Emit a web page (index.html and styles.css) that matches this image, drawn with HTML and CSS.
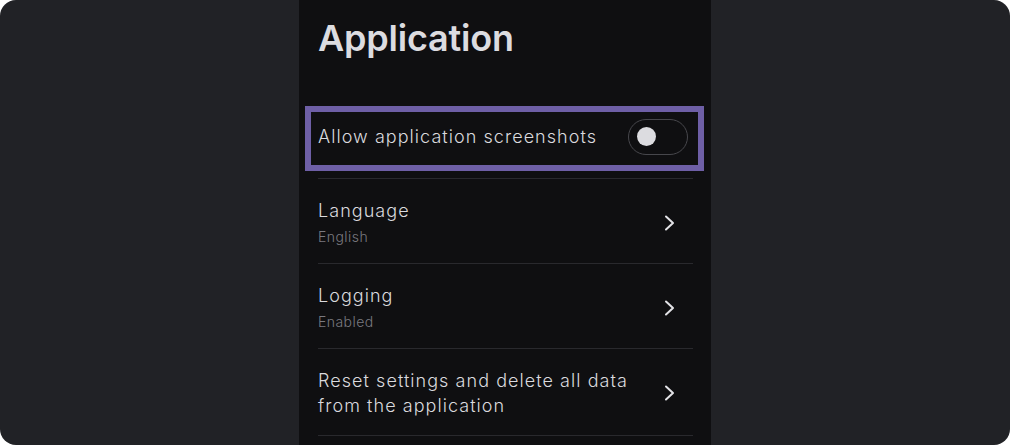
FILE: index.html
```html
<!DOCTYPE html>
<html lang="en">
<head>
<meta charset="utf-8">
<title>Application settings</title>
<link rel="stylesheet" href="styles.css">
</head>
<body>
<div class="frame">
  <main class="panel">
    <h1 class="title">Application</h1>
    <div class="highlight">
      <div class="row-toggle">
        <span class="label">Allow application screenshots</span>
        <span class="toggle"><span class="knob"></span></span>
      </div>
    </div>
    <ul class="list">
      <li class="item">
        <div class="text">
          <div class="label">Language</div>
          <div class="sub">English</div>
        </div>
        <svg class="chev" width="24" height="24" viewBox="0 0 24 24"><path d="M9 5.5l7 6.5-7 6.5" fill="none" stroke="#e2e2e6" stroke-width="2" stroke-linecap="round" stroke-linejoin="round"/></svg>
      </li>
      <li class="item">
        <div class="text">
          <div class="label">Logging</div>
          <div class="sub">Enabled</div>
        </div>
        <svg class="chev" width="24" height="24" viewBox="0 0 24 24"><path d="M9 5.5l7 6.5-7 6.5" fill="none" stroke="#e2e2e6" stroke-width="2" stroke-linecap="round" stroke-linejoin="round"/></svg>
      </li>
      <li class="item item-multi">
        <div class="text">
          <div class="label label-multi">Reset settings and delete all data<br>from the application</div>
        </div>
        <svg class="chev" width="24" height="24" viewBox="0 0 24 24"><path d="M9 5.5l7 6.5-7 6.5" fill="none" stroke="#e2e2e6" stroke-width="2" stroke-linecap="round" stroke-linejoin="round"/></svg>
      </li>
    </ul>
  </main>
</div>
</body>
</html>
```

FILE: styles.css
```css
* { box-sizing: border-box; }

html, body {
  margin: 0;
  padding: 0;
  background: #ffffff;
}

body {
  width: 1010px;
  height: 445px;
  overflow: hidden;
  font-family: Inter, "Noto Sans", sans-serif;
}

.frame {
  width: 1010px;
  height: 445px;
  background: #212226;
  border-radius: 16px;
  display: flex;
  justify-content: center;
  overflow: hidden;
}

.panel {
  width: 412px;
  height: 445px;
  background: #0f0f11;
  padding: 0 18px 0 19px;
  display: flex;
  flex-direction: column;
}

.title {
  margin: 16px 0 0 0;
  font-size: 36px;
  line-height: 44px;
  font-weight: 600;
  color: #dcdce0;
  letter-spacing: -0.2px;
}

.highlight {
  margin: 46px -11px 0 -13px;
  border: 6px solid #6e5fa6;
  padding: 7px 5px 11px 7px;
}

.row-toggle {
  display: flex;
  align-items: center;
  justify-content: space-between;
  height: 35px;
}

.label {
  font-size: 18px;
  line-height: 24px;
  font-weight: 300;
  color: #dadade;
  letter-spacing: 1.05px;
}

.toggle {
  width: 60px;
  height: 36px;
  border: 1px solid #47474c;
  border-radius: 18px;
  display: flex;
  align-items: center;
  padding-left: 8px;
  margin-right: 5px;
}

.knob {
  width: 19px;
  height: 19px;
  border-radius: 50%;
  background: #dcdce0;
}

.list {
  list-style: none;
  margin: 7px 0 0 0;
  padding: 0;
}

.item {
  display: flex;
  align-items: center;
  justify-content: space-between;
  border-top: 1px solid #29292d;
  padding: 20px 0 16px 0;
}

.item:last-child {
  border-bottom: 1px solid #29292d;
}

.item-multi {
  padding: 19px 0 17px 0;
}

.label-multi {
  line-height: 25px;
}

.sub {
  margin-top: 4px;
  font-size: 14px;
  line-height: 20px;
  font-weight: 300;
  color: #7a7a80;
  letter-spacing: 0.45px;
}

.chev {
  display: block;
  margin-right: 12px;
  flex: none;
}
```
